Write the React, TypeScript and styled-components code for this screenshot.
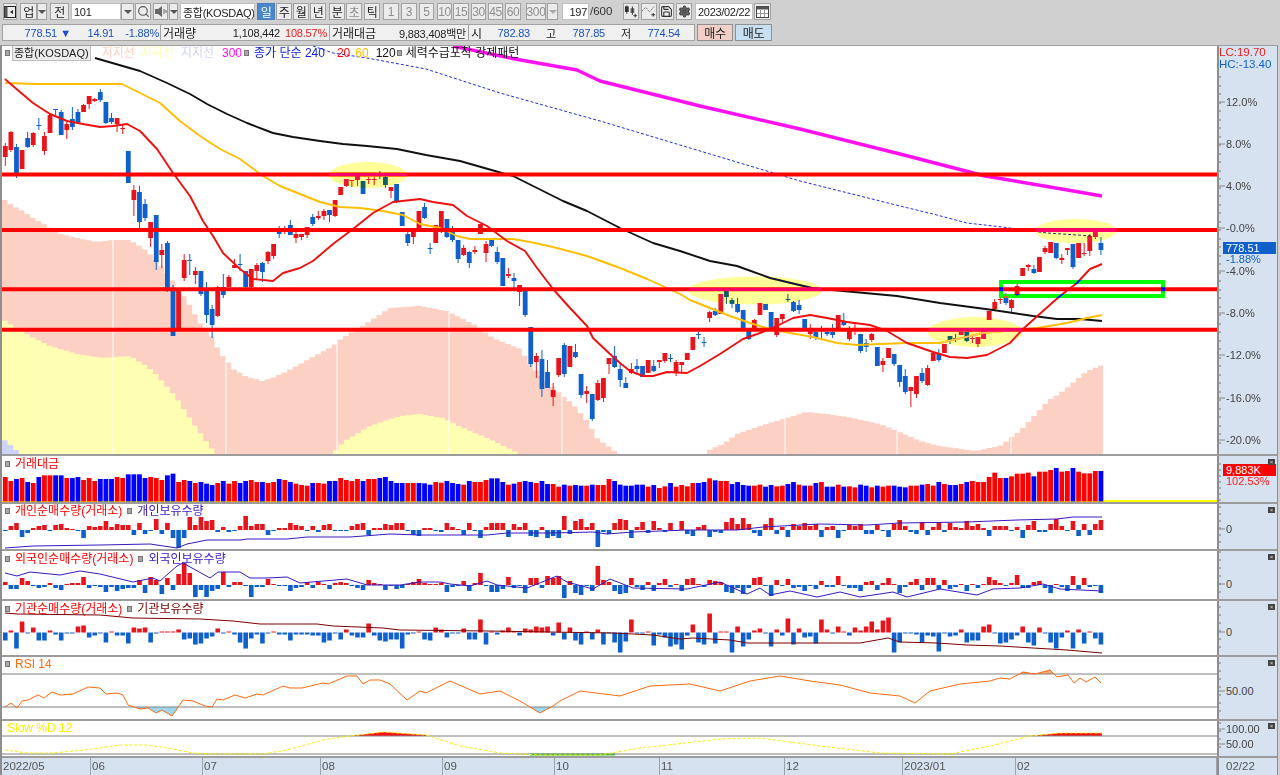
import React from "react";
import styled, { createGlobalStyle } from "styled-components";
import { Search, Save, Settings } from "lucide-react";

type Pt = [number, number];
type Candle = ["r" | "b", number, number, number?, number?];

const GlobalStyle = createGlobalStyle`
  html, body { margin: 0; padding: 0; background: #d0d0d0; overflow: hidden; }
  * { box-sizing: border-box; }
`;

const FONT = `"Liberation Sans", "Noto Sans CJK KR", sans-serif`;
const RED = "#e8141c";
const BLUE = "#1060cc";

const candles: Candle[] = [
  ["r",145,156,142,165],["r",131,149,130,151],["b",146,172,143,177],["r",149,168],["b",137,146,131,147],
  ["r",132,144,131,146],["b",124,125,117,129],["r",135,150,131,154],["r",114,132,112,132],["b",108,109,108,114],
  ["b",111,134,109,134],["r",123,129,120,138],["b",118,126,106,129],["b",111,122,108,123],["r",104,111,103,111],
  ["r",95,103,95,108],["r",98,100,97,101],["b",91,99,88,101],["b",101,122,101,123],["b",117,121,112,123],
  ["r",117,123,117,131],["r",127,128,124,133],["b",150,182],["r",189,199,184,215],["b",191,221,185,227],
  ["b",203,217,198,220],["r",221,237,221,246],["b",214,261,214,269],["r",249,254,243,267],["b",242,290,240,291],
  ["b",288,335,284,335],["r",287,328,287,330],["r",259,277,253,280],["b",259,260,253,274],["r",270,274,266,283],
  ["b",270,293,270,295],["b",288,314,281,322],["b",308,324,304,337],["r",286,315,285,316],["b",286,294,273,297],
  ["r",276,286,274,286],["r",264,267,258,267],["b",263,264,253,270],["b",270,286,270,287],["r",268,286,268,287],
  ["r",264,270,262,279],["b",262,271,261,281],["r",251,260,250,263],["r",243,255,243,258],["b",229,233,225,237],
  ["r",227,228,225,233],["b",224,234,219,234],["r",233,237,229,242],["r",233,236,233,239],["r",226,234,226,237],
  ["b",216,223,213,225],["r",215,217,210,219],["r",210,215,208,219],["b",209,214,209,221],["r",199,215,199,216],
  ["r",186,194],["r",178,185,178,186],["r",179,180,179,186],["r",174,179,173,185],["b",180,193],
  ["r",178,179,176,183],["r",178,179,176,184],["b",172,173,170,178],["b",176,184,175,187],["r",186,190,186,197],
  ["b",183,201,183,202],["b",211,225],["b",233,242,231,245],["r",231,236,227,243],["r",210,227,210,228],
  ["b",206,217,202,218],["b",247,248,242,253],["r",224,242],["r",210,230,210,232],["b",218,236,218,237],
  ["b",230,239,225,241],["b",239,258,239,262],["r",247,254,244,255],["b",251,262,250,267],["r",249,251,245,253],
  ["r",223,233],["r",243,252,240,261],["b",238,245,237,246],["b",251,261,246,263],["b",257,285],
  ["r",273,275,267,277],["b",277,280,272,287],["r",284,291,284,305],["b",290,314,290,316],["b",326,363,326,366],
  ["r",355,361,352,377],["b",358,388,349,396],["b",371,387,359,387],["r",389,396,382,405],["r",357,374,357,376],
  ["b",344,373,342,376],["r",345,366],["b",351,356,343,357],["b",373,394,373,397],["r",390,393,385,402],
  ["b",393,418,393,420],["r",382,399,379,400],["r",377,397,377,401],["r",357,363,357,373],["b",355,366,345,367],
  ["b",368,379,362,386],["b",382,387,376,387],["r",368,372,362,373],["b",365,368,358,374],["b",365,376],
  ["r",359,372],["b",365,370,359,371],["r",359,361,359,367],["r",352,360,352,362],["b",357,358,353,361],
  ["r",361,372,359,375],["r",361,364,361,373],["r",352,359],["r",336,349],["b",333,334,331,338],
  ["b",341,342,336,346],["r",311,317,310,321],["b",310,314,307,315],["r",293,313],["b",290,296,290,303],
  ["b",299,303,297,307],["b",303,311,297,312],["b",309,328],["b",330,338,327,339],["r",319,329,318,329],
  ["r",302,314],["b",303,309],["b",311,328],["r",317,334,317,336],["r",313,318,313,323],
  ["b",298,299,293,301],["b",301,310,300,311],["b",304,309,299,313],["b",318,328],["r",328,333,323,338],
  ["b",331,337,327,339],["r",327,328,325,337],["b",331,333,327,335],["b",331,334,323,337],["r",314,330],
  ["b",320,324,312,325],["r",327,338,325,340],["r",322,323,322,334],["b",333,350,333,352],["b",342,346,338,351],
  ["r",333,339,332,341],["b",346,365],["r",360,364,357,371],["r",347,357],["b",353,363,353,365],
  ["b",364,381,364,386],["b",375,391,368,393],["r",386,390,386,406],["r",375,393,375,397],["b",372,380,367,382],
  ["r",367,384,364,385],["r",352,360],["b",352,359,348,361],["r",343,352],["b",335,339,335,343],
  ["b",337,338,333,341],["r",331,334],["b",331,340,331,341],["r",337,338,335,342],["r",336,343,336,346],
  ["r",330,338],["r",310,319],["r",301,308,298,309],["r",298,299,297,303],["b",295,302,292,304],
  ["r",299,307,298,311],["r",285,294,283,295],["r",267,275],["r",264,266,263,270],["b",268,272,264,273],
  ["r",256,271],["r",247,251,245,253],["r",241,252],["b",242,257,242,258],["r",257,259,253,263],
  ["r",247,249,247,254],["b",243,266,243,268],["r",242,257],["r",252,253,242,255],["r",235,250,233,255],
  ["r",231,236,231,238],["b",242,249,236,254],
];

const ma20: Pt[] = [[5,78],[13,85],[33,102],[50,113],[67,120],[83,123],[100,126],[113,125],[127,123],[140,130],[157,148],[173,172],[190,195],[203,220],[213,235],[223,252],[240,268],[253,278],[273,280],[283,272],[300,267],[313,260],[333,243],[353,228],[373,212],[393,201],[420,198],[433,201],[453,204],[467,215],[487,225],[507,240],[525,250],[537,267],[553,288],[570,307],[587,325],[593,337],[610,353],[620,362],[630,370],[643,375],[653,375],[667,371],[687,372],[700,365],[720,353],[743,338],[760,332],[777,325],[793,317],[810,314],[827,317],[847,321],[870,324],[887,330],[907,342],[933,351],[950,356],[967,357],[987,354],[1010,342],[1023,328],[1043,310],[1060,295],[1077,282],[1090,268],[1102,263]];
const ma60: Pt[] = [[5,82],[37,83],[70,83],[122,83],[140,92],[160,102],[180,120],[200,135],[220,148],[240,158],[263,175],[280,185],[300,193],[320,201],[340,206],[360,207],[383,210],[403,214],[420,223],[440,227],[457,235],[470,238],[490,238],[513,238],[530,241],[553,246],[587,255],[620,267],[647,278],[680,293],[690,299],[710,307],[730,315],[750,322],[770,328],[790,332],[813,336],[837,342],[857,344],[880,343],[907,342],[940,342],[983,332],[1037,327],[1067,322],[1087,317],[1102,314]];
const ma120: Pt[] = [[95,57],[140,70],[167,82],[190,93],[207,103],[227,113],[247,122],[273,132],[293,136],[320,140],[343,143],[367,145],[397,148],[426,154],[460,160],[495,170],[513,175],[537,187],[563,200],[587,210],[620,227],[653,242],[680,250],[710,260],[737,265],[770,277],[812,287],[843,290],[897,295],[940,302],[993,309],[1033,315],[1057,318],[1080,318],[1102,320]];
const ma240: Pt[] = [[313,45],[333,52],[367,57],[426,68],[500,92],[600,120],[700,150],[800,180],[900,205],[933,213],[967,222],[1002,226],[1047,232],[1093,235]];
const ma300: Pt[] = [[453,45],[515,58],[577,69],[600,80],[700,105],[800,128],[900,153],[985,175],[1050,186],[1102,195]];

const pinkA: Pt[] = [[2,197],[13,205],[23,210],[33,217],[47,225],[57,232],[77,237],[97,241],[113,239],[130,239],[147,250],[163,267],[173,280],[187,300],[203,327],[213,337],[220,353],[226,358],[233,368],[245,375],[262,380],[275,376],[287,370],[333,345],[338,340],[370,320],[390,307],[420,305],[447,310],[463,318],[477,325],[493,337],[520,348],[533,367],[560,393],[573,403],[587,420],[597,437],[617,452]];
const pinkB: Pt[] = [[707,450],[723,443],[737,433],[760,425],[783,418],[807,411],[827,413],[853,417],[880,423],[897,430],[920,440],[940,445],[975,450],[1000,445],[1020,430],[1048,400],[1063,390],[1087,370],[1103,364]];
const yellowA: Pt[] = [[2,318],[13,325],[30,335],[50,345],[77,353],[103,357],[130,355],[143,363],[153,370],[175,395],[195,425],[215,452]];
const yellowB: Pt[] = [[333,452],[345,440],[370,425],[400,415],[420,413],[443,417],[463,427],[487,437],[520,453]];
const lavender: Pt[] = [[2,437],[8,442],[14,447],[20,453]];

const volLeft = [78,90,-84,81,-93,96,-78,73,73,-73,-73,81,-81,-78,87,81,90,-84,-84,-84,78,81,-70,-70,-70,-81,78,81,87,-73,-68,93,87,-90,96,-93,-98,-102,96,-90,98,90,-96,-90,87,93,-93,96,93,-84,87,-93,98,102,104,-96,96,98,-90,-90,81,87,90,84,-90,84,84,-81,-78,-90,-96,-96,96,96,-96];
const volMid = [-82,-86,78,80,-75,-81,-84,86,-75,78,78,72,-67,-67,-78,86,-83,78,-75,-78,81,-75,-84,84,92,-86,89,-87,-89,89,-86,87,87,69,-75,-86,-89,-89,-86,-86,92,-87,96,91,-81,92,87,91,81,-81,-78,67,-73,75,75,-84,-78,-87,-89,89,86,-92,-87,91,89,-84,-78,86,-89,89,-81];
const volRight = [78,-92,-92,86,-92,91,94,-86,-89,94,-89,92,89,-89,-92,-94,89,89,-86,84,89,-78,84,-87,-87,84,-78,75,78,78,63,50,66,-66,61,53,53,50,-61,47,47,42,-36,47,45,-36,47,52,52,45,-45];
const volumeTops = [...volLeft.map((z) => Math.sign(z) * (450 + Math.abs(z) / 3)), ...[...volMid, ...volRight].map((z) => Math.sign(z) * (455 + Math.abs(z) / 3))];

const personNet = [-1,4,7,-7,-3,2,4,5,-1,5,6,2,1,-1,-8,4,3,4,9,3,6,5,5,-5,7,-4,-1,11,-4,7,-8,-18,-8,13,5,13,9,10,-2,3,-2,-1,4,14,4,6,6,-5,-1,2,2,7,5,4,-1,4,-2,5,6,-1,-1,-1,4,6,7,-5,2,2,6,5,7,7,-1,-5,-6,
  2,2,-1,-2,7,3,1,-5,7,-1,-8,3,7,7,7,-7,6,3,7,-6,-7,3,-8,-6,-8,14,-4,9,11,3,7,-17,-2,-4,7,11,10,-8,3,8,-3,9,2,-2,7,-1,9,-4,-6,3,5,-7,-2,-3,8,12,6,12,6,-3,-6,6,12,-4,3,-7,6,4,7,4,6,
  -7,3,4,-8,-1,5,4,6,-4,-4,5,-1,-7,6,10,4,-2,-4,8,-5,3,8,-2,7,3,2,9,4,6,2,-6,4,4,4,-1,3,-8,5,9,-2,-2,6,11,4,-1,9,-6,6,-5,6,10];
const foreignNet = [3,-4,-4,7,4,-1,-3,-2,2,-3,-5,1,2,2,8,-3,-1,-2,-7,-2,-6,-4,-3,-3,5,-8,8,5,-9,7,-5,11,22,12,-12,-5,-12,-6,-4,13,-2,3,3,-1,-12,-2,-2,6,1,-1,-1,-6,-3,-2,3,-3,3,1,-4,2,3,2,-1,-3,-5,5,2,1,-5,-1,-4,-3,1,3,6,
  2,1,1,2,-7,-2,-1,4,-6,2,12,-1,-7,-7,-4,8,-3,-1,-8,7,7,-3,9,7,9,-13,4,-8,-10,-1,-6,19,5,3,-6,-9,-8,7,-2,-5,3,-6,2,6,-2,1,-6,6,7,1,-2,5,4,3,-7,-8,-3,-9,-3,7,8,-1,-11,5,-1,6,-3,-2,-6,-1,-4,
  4,-2,-2,9,-1,-3,-3,-6,3,4,-5,2,7,1,-8,-2,3,6,-5,7,7,-4,5,-4,-2,1,-6,1,-3,1,8,5,2,-1,2,10,-3,-3,3,4,-3,-8,1,-2,-6,9,-4,7,-2,-1,-8];
const instNet = [-8,2,-16,11,-1,5,-8,-8,2,-2,-8,-1,-1,6,7,-5,-3,-1,-10,1,-3,-3,-11,5,4,5,-10,-1,1,1,1,3,-7,-6,-12,-11,-6,-4,4,-1,1,-2,-10,-16,-6,-2,-11,-1,1,-2,-2,-8,-2,-2,-2,-3,-3,-10,-8,-1,-7,3,-3,-5,-5,9,-3,-8,-9,-7,-7,-16,-2,-1,1,
  -7,-8,5,3,-5,-1,-1,4,-7,-7,13,-12,1,-2,2,5,1,-3,4,3,6,5,6,-3,10,-7,5,-8,-12,1,-7,3,-12,-1,-10,-20,-9,13,-1,-1,1,-13,-2,-5,-14,-12,-17,-3,8,-10,-12,19,-11,1,1,-20,6,-14,-7,2,4,-1,-14,3,-3,14,-12,4,-5,-4,-11,
  13,3,-1,6,1,-3,5,2,6,11,3,12,15,-20,-10,-1,-1,-2,-10,-3,-4,-19,-1,-4,-3,3,-10,-8,-8,6,8,-1,-11,-10,-7,-3,6,-10,-13,5,-1,-10,-16,-5,2,-16,3,-11,1,-6,-12];

const personLine: Pt[] = [[5,547],[33,545],[100,544],[150,543],[177,547],[187,543],[207,539],[240,539],[247,538],[287,538],[307,536],[350,536],[390,533],[420,534],[487,534],[507,532],[553,532],[593,531],[607,533],[633,531],[687,529],[737,529],[763,526],[820,523],[867,524],[900,522],[967,521],[1017,519],[1057,518],[1073,516],[1102,516]];
const foreignLine: Pt[] = [[5,572],[17,575],[30,571],[60,574],[80,570],[100,573],[133,581],[153,577],[160,580],[177,565],[183,562],[210,577],[218,571],[240,571],[250,577],[267,577],[287,576],[300,582],[347,578],[367,584],[400,584],[420,581],[440,581],[450,583],[470,585],[487,580],[497,584],[527,587],[557,575],[567,581],[593,588],[610,578],[633,587],[687,588],[720,581],[747,593],[760,587],[770,594],[790,590],[817,596],[840,591],[860,596],[893,591],[907,596],[940,588],[977,594],[993,588],[1020,587],[1043,583],[1060,588],[1102,590]];
const instLine: Pt[] = [[5,612],[17,613],[100,614],[133,617],[200,618],[233,620],[260,623],[317,623],[333,625],[383,627],[400,629],[487,630],[613,632],[653,634],[680,638],[693,637],[730,639],[747,642],[860,642],[888,637],[900,641],[937,642],[967,644],[1000,645],[1033,647],[1067,649],[1102,652]];
const rsiLine: Pt[] = [[5,706],[11,702],[17,707],[22,700],[28,699],[38,694],[44,697],[52,691],[60,694],[73,693],[88,686],[100,687],[106,693],[117,692],[123,694],[128,704],[140,708],[148,707],[156,712],[162,709],[172,715],[183,699],[193,700],[205,705],[212,706],[217,698],[223,699],[235,694],[245,697],[257,693],[263,694],[283,685],[290,687],[302,687],[323,682],[328,683],[347,675],[357,675],[363,683],[370,679],[380,679],[390,683],[407,699],[420,690],[426,692],[450,680],[480,693],[500,690],[520,700],[540,712],[553,705],[560,700],[580,690],[620,695],[650,685],[690,683],[720,690],[750,680],[780,675],[810,680],[840,684],[870,692],[900,695],[915,702],[930,690],[960,683],[990,680],[1000,677],[1010,678],[1023,671],[1035,673],[1050,669],[1057,676],[1068,674],[1074,682],[1080,677],[1086,681],[1095,676],[1101,682]];
const stochLine: Pt[] = [[5,749],[27,752],[53,752],[93,748],[120,744],[147,744],[173,748],[193,752],[213,753],[263,753],[287,749],[327,738],[350,735],[383,731],[426,734],[460,745],[500,752],[540,754],[600,754],[640,747],[660,745],[720,738],[760,737],[820,745],[880,752],[950,753],[990,745],[1030,735],[1060,732],[1102,732]];

const xAt = (i: number) => 5.3 + 5.59 * i;
const toPoints = (list: Pt[]) => list.map(([x, y]) => `${x},${y}`).join(" ");

const yOn = (list: Pt[], x: number) => {
  for (let k = 1; k < list.length; k++) {
    if (x <= list[k][0]) {
      const [x0, y0] = list[k - 1];
      const [x1, y1] = list[k];
      return y0 + ((y1 - y0) * (x - x0)) / (x1 - x0);
    }
  }
  return list[list.length - 1][1];
};

// staircase, one step per bar, closed at the panel floor
const stepPath = (list: Pt[], floor: number) => {
  const first = list[0][0];
  const last = list[list.length - 1][0];
  let d = `M${first} ${floor}`;
  for (let x = first; x < last; x += 5.59) {
    const y = yOn(list, x + 2.8).toFixed(1);
    d += `L${x.toFixed(1)} ${y}L${Math.min(x + 5.59, last).toFixed(1)} ${y}`;
  }
  return `${d}L${last} ${floor}Z`;
};

const Page = styled.div`
  width: 1280px;
  height: 775px;
  background: #d0d0d0;
  font-family: ${FONT};
  font-size: 12px;
  color: #222;
  filter: blur(0.3px);
  overflow: hidden;
`;

const Toolbar = styled.div`
  height: 44px;
  padding-top: 3px;
  display: flex;
  flex-direction: column;
  gap: 4px;
`;

const Row = styled.div`
  display: flex;
  height: 17px;
  align-items: stretch;
`;

const Btn = styled.div<{ $w: number; $ml?: number; $on?: boolean; $dim?: boolean }>`
  flex: none;
  width: ${(p) => p.$w}px;
  margin-left: ${(p) => p.$ml ?? 1}px;
  display: flex;
  align-items: center;
  justify-content: center;
  border: 1px solid ${(p) => (p.$on ? "#4a80c0" : "#a2a2a2")};
  background: ${(p) => (p.$on ? "#4a86c8" : "#ebebeb")};
  color: ${(p) => (p.$on ? "#fff" : p.$dim ? "#8f8f8f" : "#222")};
  font-size: 12px;
  letter-spacing: -0.3px;
`;

const Field = styled(Btn)`
  background: #fff;
  border-color: #c0c0c0;
  justify-content: flex-start;
  padding-left: 2px;
  font-size: 11px;
  white-space: nowrap;
  overflow: hidden;
`;

const FieldTight = styled(Field)`
  justify-content: flex-end;
  padding: 0 1px 0 0;
`;

const Count = styled.span`
  margin-left: 1px;
  width: 26px;
  font-size: 11.5px;
  line-height: 17px;
  color: #333;
`;

const Arrow = styled.i<{ $dim?: boolean }>`
  width: 0;
  height: 0;
  border-left: 4px solid transparent;
  border-right: 4px solid transparent;
  border-top: 4px solid ${(p) => (p.$dim ? "#aaa" : "#555")};
`;

const Strip = styled.div`
  flex: none;
  width: 693px;
  margin-left: 2px;
  display: flex;
  background: #f0f0f0;
  border: 1px solid #a2a2a2;
  white-space: nowrap;
`;

const Cell = styled.div<{ $w: number; $last?: boolean }>`
  flex: none;
  width: ${(p) => p.$w}px;
  display: flex;
  align-items: center;
  border-right: ${(p) => (p.$last ? "none" : "1px solid #a2a2a2")};
`;

const Val = styled.span<{ $w: number; $c?: string; $left?: boolean }>`
  flex: none;
  width: ${(p) => p.$w}px;
  text-align: ${(p) => (p.$left ? "left" : "right")};
  color: ${(p) => p.$c ?? "#222"};
  font-size: ${(p) => (p.$left ? 12 : 11)}px;
  letter-spacing: ${(p) => (p.$left ? 0 : -0.2)}px;
  padding-left: ${(p) => (p.$left ? 2 : 0)}px;
`;

const TradeBtn = styled(Btn)<{ $bg: string }>`
  background: ${(p) => p.$bg};
  border-color: #909090;
  margin-left: 2px;
`;

const Board = styled.div`
  margin-top: 1px;
  width: 1278px;
  background: #fff;
  border-top: 1px solid #a0a0a0;
  border-left: 2px solid #8e8e8e;
  border-right: 1px solid #8e8e8e;
  border-bottom: 1px solid #8e8e8e;
`;

const Panel = styled.div<{ $h: number }>`
  height: ${(p) => p.$h}px;
  display: grid;
  grid-template-columns: 1215px 60px;
  border-bottom: 2px solid #9c9c9c;
`;

const Plot = styled.div`
  position: relative;
  overflow: hidden;
  svg {
    display: block;
  }
`;

const Legend = styled.div<{ $top: number; $gap?: number }>`
  position: absolute;
  left: 3px;
  top: ${(p) => p.$top}px;
  display: flex;
  align-items: center;
  gap: ${(p) => p.$gap ?? 5}px;
  white-space: nowrap;
  font-size: 12px;
  line-height: 14px;
`;

const Marker = styled.i<{ $ml?: number }>`
  flex: none;
  width: 5px;
  height: 6px;
  margin-left: ${(p) => p.$ml ?? 0}px;
  background: #a8a8a8;
  border: 1px solid #777;
`;

const Tag = styled.span<{ $c: string; $ml?: number }>`
  color: ${(p) => p.$c};
  margin-left: ${(p) => p.$ml ?? 0}px;
`;

const NameBox = styled.span`
  background: #ececec;
  border: 1px solid #bdbdbd;
  margin-left: 2px;
  padding: 0 1px;
  color: #222;
  font-size: 11px;
`;

const Side = styled.div`
  position: relative;
  background: #d6e2f0;
  border-left: 2px solid #8e8e8e;
  svg {
    display: block;
  }
`;

const ScaleFlag = styled.div<{ $top: number; $bg: string }>`
  position: absolute;
  left: 4px;
  top: ${(p) => p.$top}px;
  width: 53px;
  height: 12px;
  background: ${(p) => p.$bg};
  color: #fff;
  font-size: 11px;
  line-height: 12px;
  padding-left: 3px;
`;

const ScaleNote = styled.div<{ $top: number; $c: string }>`
  position: absolute;
  left: 7px;
  top: ${(p) => p.$top}px;
  color: ${(p) => p.$c};
  font-size: 11px;
  line-height: 11px;
`;

const Limits = styled.div`
  position: absolute;
  left: 0;
  top: 0;
  font-size: 11.5px;
  line-height: 12px;
`;

const CloseMark = styled.div<{ $top: number }>`
  position: absolute;
  right: 2px;
  top: ${(p) => p.$top}px;
  width: 7px;
  height: 6px;
  background: #444;
  color: #ddd;
  font-size: 6px;
  line-height: 6px;
  text-align: center;
`;

const TimeRow = styled.div`
  height: 17px;
  display: grid;
  grid-template-columns: 1215px 60px;
  background: #d6e2f0;
`;

const TimeCells = styled.div`
  display: flex;
`;

const TimeCell = styled.div<{ $w: number }>`
  flex: none;
  width: ${(p) => p.$w}px;
  padding-left: 1px;
  border-right: 1px solid #9aa4b0;
  font-size: 11.5px;
  line-height: 17px;
  color: #555;
`;

const TimeEnd = styled.div`
  border-left: 2px solid #8e8e8e;
  padding-left: 7px;
  font-size: 11.5px;
  line-height: 17px;
  color: #555;
`;

const ChartSvg: React.FC<{ top: number; h: number; children: React.ReactNode }> = ({ top, h, children }) => (
  <svg width={1215} height={h} viewBox={`2 ${top} 1215 ${h}`}>
    <rect x={2} y={top} width={1215} height={h} fill="#fff" />
    {children}
  </svg>
);

const Line: React.FC<{ d: Pt[]; c: string; w?: number; dash?: string }> = ({ d, c, w = 1, dash }) => (
  <polyline points={toPoints(d)} fill="none" stroke={c} strokeWidth={w} strokeDasharray={dash} strokeLinejoin="round" />
);

const Bars: React.FC<{ data: number[]; base: number }> = ({ data, base }) => (
  <>
    {data.map((v, i) => (
      <rect
        key={i}
        x={xAt(i) - 2.3}
        y={v > 0 ? base - v : base}
        width={4.6}
        height={Math.abs(v)}
        fill={v > 0 ? RED : BLUE}
      />
    ))}
  </>
);

const CandleMark: React.FC<{ c: Candle; i: number }> = ({ c, i }) => {
  const [kind, top, bottom, hi = top, lo = bottom] = c;
  const color = kind === "r" ? RED : BLUE;
  const x = xAt(i);
  return (
    <g>
      <line x1={x} x2={x} y1={hi} y2={lo} stroke={color} strokeWidth={1} />
      <rect x={x - 2.4} y={top} width={4.8} height={Math.max(bottom - top, 1)} fill={color} />
    </g>
  );
};

const ellipses = [
  [368, 174, 39, 13],
  [755, 289.5, 67, 14],
  [975, 331, 47.5, 15],
  [1076, 230, 41, 12],
];
const whiteLines = [113, 226, 337, 449, 562, 785, 897, 1011];
const levels = [173.6, 229, 288.2, 328.8];

const MainChart = () => (
  <ChartSvg top={45} h={408}>
    <path d={stepPath(pinkA, 453)} fill="#fdd0c4" />
    <path d={stepPath(pinkB, 453)} fill="#fdd0c4" />
    <path d={stepPath(yellowA, 453)} fill="#ffffb4" />
    <path d={stepPath(yellowB, 453)} fill="#ffffb4" />
    <path d={stepPath(lavender, 453)} fill="#cfd2fa" />
    {whiteLines.map((x) => (
      <line key={x} x1={x} x2={x} y1={yOn(x < 620 ? pinkA : pinkB, x)} y2={453} stroke="#fff" strokeWidth={1} />
    ))}
    {candles.map((c, i) => (
      <CandleMark key={i} c={c} i={i} />
    ))}
    <Line d={ma240} c="#2030e0" w={1} dash="3 2" />
    <Line d={ma300} c="#ff10f0" w={3.4} />
    <Line d={ma120} c="#111" w={1.9} />
    <Line d={ma60} c="#ffbf00" w={1.9} />
    <Line d={ma20} c="#ee1010" w={1.9} />
    {levels.map((y) => (
      <line key={y} x1={2} x2={1217} y1={y} y2={y} stroke="#ff0000" strokeWidth={4} />
    ))}
    {/* XOR-style pens of the drawing tools */}
    {ellipses.map(([cx, cy, rx, ry]) => (
      <ellipse key={cx} cx={cx} cy={cy} rx={rx} ry={ry} fill="rgb(0,0,102)" style={{ mixBlendMode: "difference" }} />
    ))}
    <rect x={1001} y={281} width={162} height={14} fill="none" stroke="#ff00ff" strokeWidth={4} style={{ mixBlendMode: "difference" }} />
  </ChartSvg>
);

const VolumeChart = () => (
  <ChartSvg top={455} h={46}>
    <rect x={2} y={500} width={1215} height={1} fill="#ffff00" />
    <rect x={1104} y={499} width={113} height={2} fill="#ffff00" />
    {volumeTops.map((v, i) => (
      <rect key={i} x={xAt(i) - 2.4} y={Math.abs(v)} width={4.8} height={500.5 - Math.abs(v)} fill={v > 0 ? "#ff0000" : "#0000ff"} />
    ))}
  </ChartSvg>
);

const RsiChart = () => {
  const first = rsiLine[0][0];
  const last = rsiLine[rsiLine.length - 1][0];
  const area = (y: number) => `${first},${y} ${toPoints(rsiLine)} ${last},${y}`;
  return (
    <ChartSvg top={656} h={62}>
      <defs>
        <clipPath id="rsi-high">
          <rect x={0} y={656} width={1217} height={17} />
        </clipPath>
        <clipPath id="rsi-low">
          <rect x={0} y={706} width={1217} height={12} />
        </clipPath>
      </defs>
      <polygon points={area(673)} fill="#f8a868" clipPath="url(#rsi-high)" />
      <polygon points={area(706)} fill="#9cd8f0" clipPath="url(#rsi-low)" />
      <line x1={2} x2={1217} y1={673} y2={673} stroke="#808080" />
      <line x1={2} x2={1217} y1={706} y2={706} stroke="#808080" />
      <Line d={rsiLine} c="#ff6a10" />
    </ChartSvg>
  );
};

const StochChart = () => {
  const high = (from: number, to: number) => {
    const part = stochLine.filter(([x]) => x >= from && x <= to);
    return `${from},735 ${toPoints(part)} ${to},735`;
  };
  return (
    <ChartSvg top={720} h={35}>
      <polygon points={high(350, 426)} fill="#ff1010" />
      <polygon points={high(1030, 1102)} fill="#ff1010" />
      <rect x={530} y={752.5} width={85} height={2} fill="#30d030" />
      <line x1={2} x2={1217} y1={735} y2={735} stroke="#808080" />
      <line x1={2} x2={1217} y1={753} y2={753} stroke="#808080" />
      <Line d={stochLine} c="#f8f000" dash="3 2" />
    </ChartSvg>
  );
};

// value axis, drawn in page coordinates
const Scale: React.FC<{ top: number; h: number; ticks: number[]; labels: [number, string][] }> = ({ top, h, ticks, labels }) => (
  <svg width={58} height={h} viewBox={`1219 ${top} 58 ${h}`}>
    {ticks.map((y) => (
      <line key={y} x1={1219} x2={1221} y1={y} y2={y} stroke="#777" />
    ))}
    {labels.map(([y, t]) => (
      <g key={y}>
        <line x1={1219} x2={1225} y1={y} y2={y} stroke="#888" />
        <text x={1226} y={y + 4} fontSize={11} fill="#444" fontFamily={FONT}>
          {t}
        </text>
      </g>
    ))}
  </svg>
);

const range = (from: number, to: number, step: number) => {
  const out: number[] = [];
  for (let y = from; y < to; y += step) out.push(Math.round(y));
  return out;
};

const LayoutIcon = () => (
  <svg width={12} height={13} viewBox="0 0 12 13">
    <rect x={0.5} y={1.5} width={11} height={11} fill="none" stroke="#222" strokeWidth={1} />
    <rect x={0.5} y={1.5} width={3} height={11} fill="#555" />
    <path d="M9 5L6 7l3 2z" fill="#222" />
  </svg>
);

const CandleIcon = () => (
  <svg width={15} height={13} viewBox="0 0 15 13">
    <rect x={1} y={1} width={4} height={6} fill="#333" />
    <path d="M3 0v9" stroke="#333" />
    <rect x={7} y={3} width={4} height={5} fill="#666" />
    <path d="M9 1v9M10 11h4M12 9v4" stroke="#333" />
  </svg>
);

const WaveIcon = () => (
  <svg width={15} height={13} viewBox="0 0 15 13">
    <path d="M0 6L4 2l4 5 5-6" fill="none" stroke="#777" strokeWidth={1} strokeDasharray="2 1" />
    <path d="M10 10h4M12 8v4" stroke="#222" />
  </svg>
);

const SpeakerIcon = () => (
  <svg width={13} height={13} viewBox="0 0 13 13">
    <path d="M1 4h3l4-3v11L4 9H1z" fill="#666" />
    <path d="M10 4v5M12 5v3" stroke="#666" />
  </svg>
);

const CalendarIcon = () => (
  <svg width={13} height={12} viewBox="0 0 13 12">
    <rect x={0.5} y={0.5} width={12} height={11} fill="#fff" stroke="#444" />
    <rect x={0.5} y={0.5} width={12} height={3} fill="#555" />
    <path d="M4.5 4v7M8.5 4v7M1 7.5h11" stroke="#999" />
  </svg>
);

const periods: [string, boolean][] = [["일", true], ["주", false], ["월", false], ["년", false]];
const fineSteps: [string, number, number][] = [["1", 16, 3], ["3", 16, 2], ["5", 15, 2], ["10", 15, 3], ["15", 16, 1], ["30", 15, 2], ["45", 15, 2], ["60", 16, 2]];
const axisCells: [string, number][] = [["2022/05", 89], ["06", 112], ["07", 118], ["08", 122], ["09", 112], ["10", 105], ["11", 125], ["12", 118], ["2023/01", 113], ["02", 201]];

const TopBars = () => (
  <Toolbar>
    <Row>
      <Btn $w={14} $ml={3}><LayoutIcon /></Btn>
      <Btn $w={17} $ml={3}>업</Btn>
      <Btn $w={10} $ml={0}><Arrow /></Btn>
      <Btn $w={19} $ml={3}>전</Btn>
      <Field $w={50} $ml={2}>101</Field>
      <Btn $w={13} $ml={0}><Arrow /></Btn>
      <Btn $w={16} $ml={1}><Search size={13} color="#555" /></Btn>
      <Btn $w={15} $ml={2}><SpeakerIcon /></Btn>
      <Btn $w={9} $ml={1}><Arrow /></Btn>
      <Field $w={75} $ml={2}>종합(KOSDAQ)</Field>
      {periods.map(([t, on], i) => (
        <Btn key={t} $w={i === 0 ? 18 : 16} $ml={i === 0 ? 2 : 1} $on={on}>{t}</Btn>
      ))}
      <Btn $w={16} $ml={3}>분</Btn>
      <Btn $w={16} $ml={1} $dim>초</Btn>
      <Btn $w={16} $ml={2}>틱</Btn>
      {fineSteps.map(([t, w, ml]) => (
        <Btn key={t} $w={w} $ml={ml} $dim>{t}</Btn>
      ))}
      <Btn $w={20} $ml={5} $dim>300</Btn>
      <Btn $w={11} $ml={1}><Arrow $dim /></Btn>
      <FieldTight $w={27} $ml={4}>197</FieldTight>
      <Count>/600</Count>
      <Btn $w={16} $ml={7}><CandleIcon /></Btn>
      <Btn $w={16} $ml={2}><WaveIcon /></Btn>
      <Btn $w={15} $ml={2}><Save size={13} color="#333" /></Btn>
      <Btn $w={16} $ml={2}><Settings size={13} color="#444" fill="#666" /></Btn>
      <Field $w={58} $ml={3}>2023/02/22</Field>
      <Btn $w={17} $ml={1}><CalendarIcon /></Btn>
    </Row>
    <Row>
      <Strip>
        <Cell $w={158}>
          <Val $w={54} $c="#1a50c8">778.51</Val>
          <Val $w={14} $c="#1a50c8">▼</Val>
          <Val $w={43} $c="#1a50c8">14.91</Val>
          <Val $w={45} $c="#1a50c8">-1.88%</Val>
        </Cell>
        <Cell $w={169}>
          <Val $w={40} $left>거래량</Val>
          <Val $w={79}>1,108,442</Val>
          <Val $w={47} $c="#e82020">108.57%</Val>
        </Cell>
        <Cell $w={139}>
          <Val $w={50} $left>거래대금</Val>
          <Val $w={86}>9,883,408백만</Val>
        </Cell>
        <Cell $w={225} $last>
          <Val $w={12} $left>시</Val>
          <Val $w={49} $c="#1a50c8">782.83</Val>
          <Val $w={26}>고</Val>
          <Val $w={49} $c="#1a50c8">787.85</Val>
          <Val $w={26}>저</Val>
          <Val $w={49} $c="#1a50c8">774.54</Val>
        </Cell>
      </Strip>
      <TradeBtn $w={36} $bg="#f2d0c8">매수</TradeBtn>
      <TradeBtn $w={37} $bg="#c8dff2">매도</TradeBtn>
    </Row>
  </Toolbar>
);

const App: React.FC = () => (
  <Page>
    <GlobalStyle />
    <TopBars />
    <Board>
      <Panel $h={410}>
        <Plot>
          <MainChart />
          <Legend $top={-1} $gap={0}>
            <Marker />
            <NameBox>종합(KOSDAQ)</NameBox>
            <Tag $c="#fdd0c4" $ml={11}>지지선</Tag>
            <Tag $c="#ffffb0" $ml={6}>지지선</Tag>
            <Tag $c="#d4d4fa" $ml={7}>지지선</Tag>
            <Tag $c="#ff10f0" $ml={8}>300</Tag>
            <Marker $ml={2} />
            <Tag $c="#1020e0" $ml={5}>종가 단순 240</Tag>
            <Tag $c="#ff0000" $ml={12}>20</Tag>
            <Tag $c="#ffc000" $ml={5}>60</Tag>
            <Tag $c="#111" $ml={7}>120</Tag>
            <Marker $ml={1} />
            <Tag $c="#111" $ml={4}>세력수급포착 강제패턴</Tag>
          </Legend>
        </Plot>
        <Side>
          <Scale
            top={45}
            h={408}
            ticks={range(76, 450, 8.5)}
            labels={[[101,"12.0%"],[143,"8.0%"],[185,"4.0%"],[227,"-0.0%"],[270,"-4.0%"],[312,"-8.0%"],[354,"-12.0%"],[397,"-16.0%"],[439,"-20.0%"]]}
          />
          <Limits>
            <Tag as="div" $c="#e82020">LC:19.70</Tag>
            <Tag as="div" $c="#1060cc">HC:-13.40</Tag>
          </Limits>
          <ScaleFlag $top={196} $bg="#1060cc">778.51</ScaleFlag>
          <ScaleNote $top={208} $c="#1060cc">-1.88%</ScaleNote>
        </Side>
      </Panel>
      <Panel $h={48}>
        <Plot>
          <VolumeChart />
          <Legend $top={1}>
            <Marker />
            <Tag $c="#ff0000">거래대금</Tag>
          </Legend>
        </Plot>
        <Side>
          <Scale top={455} h={46} ticks={range(463, 500, 6)} labels={[]} />
          <ScaleFlag $top={8} $bg="#ff0000">9,883K</ScaleFlag>
          <ScaleNote $top={20} $c="#ff2020">102.53%</ScaleNote>
          <CloseMark $top={3}>×</CloseMark>
        </Side>
      </Panel>
      <Panel $h={47}>
        <Plot>
          <ChartSvg top={503} h={45}>
            <Bars data={personNet} base={529} />
            <Line d={personLine} c="#3a18c0" />
          </ChartSvg>
          <Legend $top={0}>
            <Marker />
            <Tag $c="#ff0000">개인순매수량(거래소)</Tag>
            <Marker />
            <Tag $c="#3a18c0">개인보유수량</Tag>
          </Legend>
        </Plot>
        <Side>
          <Scale top={503} h={45} ticks={range(506, 545, 7)} labels={[[528,"0"]]} />
          <CloseMark $top={3}>×</CloseMark>
        </Side>
      </Panel>
      <Panel $h={50}>
        <Plot>
          <ChartSvg top={550} h={48}>
            <Bars data={foreignNet} base={584} />
            <Line d={foreignLine} c="#3a18c0" />
          </ChartSvg>
          <Legend $top={1}>
            <Marker />
            <Tag $c="#ff0000">외국인순매수량(거래소)</Tag>
            <Marker />
            <Tag $c="#3a18c0">외국인보유수량</Tag>
          </Legend>
        </Plot>
        <Side>
          <Scale top={550} h={48} ticks={range(551, 596, 8)} labels={[[583,"0"]]} />
          <CloseMark $top={3}>×</CloseMark>
        </Side>
      </Panel>
      <Panel $h={56}>
        <Plot>
          <ChartSvg top={600} h={54}>
            <Bars data={instNet} base={631.5} />
            <Line d={instLine} c="#7a0000" />
          </ChartSvg>
          <Legend $top={1}>
            <Marker />
            <Tag $c="#ff0000">기관순매수량(거래소)</Tag>
            <Marker />
            <Tag $c="#7a0000">기관보유수량</Tag>
          </Legend>
        </Plot>
        <Side>
          <Scale top={600} h={54} ticks={range(606, 650, 8)} labels={[[631,"0"]]} />
          <CloseMark $top={3}>×</CloseMark>
        </Side>
      </Panel>
      <Panel $h={64}>
        <Plot>
          <RsiChart />
          <Legend $top={0}>
            <Marker />
            <Tag $c="#ff6a10">RSI 14</Tag>
          </Legend>
        </Plot>
        <Side>
          <Scale top={656} h={62} ticks={range(662, 716, 8)} labels={[[690,"50.00"]]} />
          <CloseMark $top={3}>×</CloseMark>
        </Side>
      </Panel>
      <Panel $h={37}>
        <Plot>
          <StochChart />
          <Legend $top={0}>
            <Tag $c="#f8f000" $ml={2}>Slow %D 12</Tag>
          </Legend>
        </Plot>
        <Side>
          <Scale top={720} h={35} ticks={range(722, 754, 8)} labels={[[728,"100.00"],[743,"50.00"]]} />
          <CloseMark $top={2}>×</CloseMark>
        </Side>
      </Panel>
      <TimeRow>
        <TimeCells>
          {axisCells.map(([t, w]) => (
            <TimeCell key={t} $w={w}>{t}</TimeCell>
          ))}
        </TimeCells>
        <TimeEnd>02/22</TimeEnd>
      </TimeRow>
    </Board>
  </Page>
);

export default App;
